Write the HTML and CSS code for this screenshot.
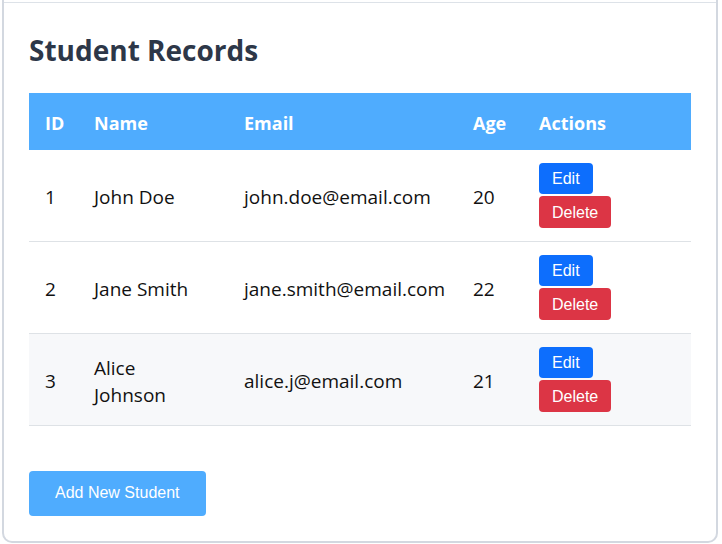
FILE: index.html
```html
<!DOCTYPE html>
<html lang="en">
<head>
<meta charset="utf-8">
<title>Student Records</title>
<link rel="stylesheet" href="styles.css">
</head>
<body>
<div class="card">
  <div class="card-inner">
    <h1 class="title">Student Records</h1>
    <table class="records">
      <colgroup>
        <col class="c-id"><col class="c-name"><col class="c-email"><col class="c-age"><col class="c-actions">
      </colgroup>
      <thead>
        <tr><th>ID</th><th>Name</th><th>Email</th><th>Age</th><th>Actions</th></tr>
      </thead>
      <tbody>
        <tr>
          <td>1</td><td>John Doe</td><td>john.doe@email.com</td><td>20</td>
          <td class="act"><div class="actions"><button class="btn btn-edit">Edit</button><button class="btn btn-delete">Delete</button></div></td>
        </tr>
        <tr>
          <td>2</td><td>Jane Smith</td><td>jane.smith@email.com</td><td>22</td>
          <td class="act"><div class="actions"><button class="btn btn-edit">Edit</button><button class="btn btn-delete">Delete</button></div></td>
        </tr>
        <tr class="alt">
          <td>3</td><td>Alice Johnson</td><td>alice.j@email.com</td><td>21</td>
          <td class="act"><div class="actions"><button class="btn btn-edit">Edit</button><button class="btn btn-delete">Delete</button></div></td>
        </tr>
      </tbody>
    </table>
    <button class="btn-add">Add New Student</button>
  </div>
</div>
</body>
</html>
```
FILE: styles.css
```css
html, body {
  margin: 0;
  padding: 0;
  background: #ffffff;
}
body {
  padding: 0 4px 2px 2px;
  font-family: "Open Sans", "Noto Sans", sans-serif;
}
.card {
  border: 2px solid #d3d8e0;
  border-top: none;
  border-radius: 0 0 10px 10px;
  padding-top: 2px;
}
.card-inner {
  border-top: 1px solid #dde2e8;
  padding: 25px 25px 25px 25px;
}
.title {
  margin: 4px 0 25px 0;
  font-size: 28px;
  line-height: 36px;
  font-weight: 700;
  color: #2d3748;
}
.records {
  width: 100%;
  border-collapse: collapse;
  table-layout: fixed;
  font-size: 19px;
  line-height: 27px;
  color: #111111;
}
.c-id { width: 49px; }
.c-name { width: 150px; }
.c-email { width: 229px; }
.c-age { width: 66px; }
.records th {
  background: #4facfe;
  color: #ffffff;
  font-size: 18px;
  font-weight: 700;
  text-align: left;
  padding: 17px 16px 13px 16px;
}
.records td {
  padding: 15px 16px 11px 16px;
  border-bottom: 1px solid #dee2e6;
  vertical-align: middle;
}
.records td.act {
  padding: 13px 16px;
}
.records tr.alt td {
  background: #f7f8fa;
}
.actions {
  display: flex;
  flex-direction: column;
  align-items: flex-start;
  gap: 2px;
}
.btn {
  font-family: "Liberation Sans", Arial, sans-serif;
  font-size: 16px;
  line-height: 19px;
  padding: 6px 13px;
  border: none;
  border-radius: 4px;
  color: #ffffff;
}
.btn-edit { background: #0d6efd; }
.btn-delete { background: #dc3545; padding-top: 7px; }
.btn-add {
  margin-top: 45px;
  font-family: "Liberation Sans", Arial, sans-serif;
  font-size: 16px;
  line-height: 18px;
  padding: 13px 26px 14px 26px;
  border: none;
  border-radius: 4px;
  background: #4facfe;
  color: #ffffff;
}
```
